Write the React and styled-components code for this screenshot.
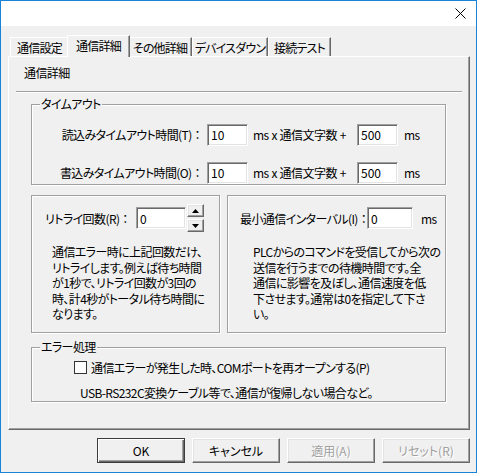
// Libraries

import React from 'react'
import styled, { createGlobalStyle, css } from 'styled-components'

// Private

const GlobalStyle = createGlobalStyle`
  html, body {
    margin: 0;
    padding: 0;
    background: #ffffff;
  }

  body {
    font-family: "Noto Sans CJK JP", "Noto Sans", sans-serif;
    font-size: 12px;
    font-feature-settings: "palt";
    letter-spacing: -0.6px;
    color: #000000;
  }

  * {
    box-sizing: border-box;
  }
`

const raised = css`
  background: #f0f0f0;
  border: 1px solid;
  border-color: #ffffff #696969 #696969 #ffffff;
  box-shadow: inset -1px -1px 0 #a0a0a0, inset 1px 1px 0 #e3e3e3;
`

const StyledWindow = styled.div`
  width: 477px;
  height: 473px;
  border: 1px solid #1883d7;
  background: #f0f0f0;
  display: flex;
  flex-direction: column;
`

const StyledTitleBar = styled.div`
  height: 25px;
  background: #ffffff;
  display: flex;
  align-items: center;
  justify-content: flex-end;
  padding-right: 10px;
`

const StyledBody = styled.div`
  flex: 1;
  display: flex;
  flex-direction: column;
  padding: 9px 6px 0 7px;
`

const StyledTabStrip = styled.div`
  height: 21px;
  display: flex;
  align-items: flex-end;
  padding-left: 2px;
`

const StyledTab = styled.div`
  ${({ $active, $width }) => `
    position: relative;
    z-index: ${$active ? 2 : 1};
    width: ${$active ? $width + 4 : $width}px;
    height: ${$active ? '22px' : '19px'};
    margin: ${$active ? '0 -2px -1px' : '0'};
    padding-bottom: ${$active ? '2px' : '0'};
    display: flex;
    align-items: center;
    justify-content: center;
    background: #f0f0f0;
    border: 1px solid;
    border-bottom: none;
    border-color: #ffffff #696969 transparent #ffffff;
    box-shadow: inset -1px 0 0 #a0a0a0;
    letter-spacing: -0.8px;
    white-space: nowrap;
  `}
`

const StyledPanel = styled.div`
  height: 374px;
  display: flex;
  flex-direction: column;
  padding: 0 7px;
  border: 1px solid;
  border-color: #ffffff #696969 #696969 #ffffff;
  box-shadow: inset -1px -1px 0 #a0a0a0;
`

const StyledHeader = styled.div`
  margin: 8px 0 0 8px;
  line-height: 16px;
`

const StyledSeparator = styled.div`
  height: 2px;
  margin-top: 10px;
  border-top: 1px solid #a0a0a0;
  border-bottom: 1px solid #ffffff;
`

const StyledGroups = styled.div`
  display: flex;
  flex-direction: column;
  margin: 11px 16px 0 15px;
`

const StyledGroup = styled.div`
  ${({ $height, $width, $top, $padTop, $padLeft }) => `
    position: relative;
    height: ${$height}px;
    width: ${$width ? `${$width}px` : 'auto'};
    flex: ${$width ? 'none' : '1'};
    margin-top: ${$top || 0}px;
    padding: ${$padTop || 0}px 0 0 ${$padLeft || 0}px;
    border: 1px solid #a0a0a0;
    box-shadow: inset 1px 1px 0 #ffffff, 1px 1px 0 #ffffff;
  `}
`

const StyledLegend = styled.span`
  position: absolute;
  top: -9px;
  left: 8px;
  padding: 0 1px;
  line-height: 16px;
  background: #f0f0f0;
`

const StyledTimeoutRows = styled.div`
  display: flex;
  flex-direction: column;
  gap: 15px;
`

const StyledTimeoutRow = styled.div`
  display: grid;
  grid-template-columns: 175px 41px 109px 41px auto;
  align-items: center;
  height: 23px;
  white-space: pre;
`

const StyledRowLabel = styled.span`
  text-align: right;
  padding-right: 4px;
`

const StyledColon = styled.span`
  font-feature-settings: normal;
`

const StyledUnit = styled.span`
  ${({ $gap }) => `
    padding-left: ${$gap}px;
    letter-spacing: -0.5px;
    word-spacing: 0.5px;
    white-space: pre;
  `}
`

const StyledEdit = styled.input`
  ${({ $width }) => `
    width: ${$width}px;
    height: 22px;
    margin: 0;
    padding: 0 0 0 3px;
    font: inherit;
    letter-spacing: 0;
    color: #000000;
    background: #ffffff;
    border: 1px solid;
    border-color: #a0a0a0 #ffffff #ffffff #a0a0a0;
    box-shadow: inset 1px 1px 0 #696969, inset -1px -1px 0 #e3e3e3;
    outline: none;
  `}
`

const StyledMidRow = styled.div`
  display: flex;
  gap: 7px;
  margin-top: 10px;
`

const StyledFieldRow = styled.div`
  display: flex;
  align-items: center;
  height: 28px;
  white-space: nowrap;
`

const StyledFieldLabel = styled.span`
  ${({ $width }) => `
    width: ${$width}px;
  `}
`

const StyledSpin = styled.div`
  display: flex;
  flex-direction: column;
  gap: 2px;
  margin-left: 1px;
`

const StyledSpinButton = styled.div`
  ${raised}
  width: 17px;
  height: 13px;
  display: flex;
  align-items: center;
  justify-content: center;
`

const StyledNote = styled.div`
  ${({ $indent }) => `
    margin-top: 12px;
    padding-left: ${$indent}px;
    line-height: 15.5px;
    white-space: nowrap;
  `}
`

const StyledCheckRow = styled.label`
  display: flex;
  align-items: center;
  height: 16px;
  padding-left: 42px;
  white-space: nowrap;
`

const StyledCheckBox = styled.span`
  width: 13px;
  height: 13px;
  margin-right: 4px;
  border: 1px solid #333333;
  background: #ffffff;
`

const StyledHint = styled.div`
  margin-top: 10px;
  padding-left: 48px;
  line-height: 16px;
  white-space: nowrap;
`

const StyledButtonRow = styled.div`
  display: flex;
  justify-content: flex-end;
  gap: 7px;
  margin-top: 8px;
`

const StyledButton = styled.button`
  ${({ $default, disabled }) => `
    width: 88px;
    height: 25px;
    margin: 0;
    padding: 0;
    font: inherit;
    background: #f0f0f0;
    color: ${disabled ? '#a0a0a0' : '#000000'};
    text-shadow: ${disabled ? '1px 1px 0 #ffffff' : 'none'};
    border: 1px solid;
    border-color: ${$default ? '#3c3c3c' : '#ffffff #696969 #696969 #ffffff'};
    box-shadow: ${$default
      ? 'inset 1px 1px 0 #ffffff, inset -1px -1px 0 #696969, inset -2px -2px 0 #a0a0a0'
      : 'inset -1px -1px 0 #a0a0a0, inset 1px 1px 0 #e3e3e3'};
  `}
`

const tabs = [
  { label: '通信設定', width: 59 },
  { label: '通信詳細', width: 59 },
  { label: 'その他詳細', width: 64 },
  { label: 'デバイスダウン', width: 76 },
  { label: '接続テスト', width: 63 },
]

const retryNote = [
  '通信エラー時に上記回数だけ、',
  'リトライします。例えば待ち時間',
  'が1秒で、リトライ回数が3回の',
  '時、計4秒がトータル待ち時間に',
  'なります。',
]

const intervalNote = [
  'PLCからのコマンドを受信してから次の',
  '送信を行うまでの待機時間です。全',
  '通信に影響を及ぼし、通信速度を低',
  '下させます。通常は0を指定して下さ',
  'い。',
]

const timeoutRows = [
  { label: '読込みタイムアウト時間(T)', rate: '10', base: '500' },
  { label: '書込みタイムアウト時間(O)', rate: '10', base: '500' },
]

const Arrow = ({ up }) => (
  <svg width="7" height="4" viewBox="0 0 7 4">
    <polygon points={up ? '3.5,0 7,4 0,4' : '0,0 7,0 3.5,4'} fill="#000" />
  </svg>
)

// Public

const App = () => (
  <>
    <GlobalStyle />
    <StyledWindow>
      <StyledTitleBar>
        <svg width="11" height="11" viewBox="0 0 11 11">
          <path d="M0.5 0.5 L10.5 10.5 M10.5 0.5 L0.5 10.5" stroke="#000" strokeWidth="1" />
        </svg>
      </StyledTitleBar>

      <StyledBody>
        <StyledTabStrip>
          {tabs.map((tab, i) => (
            <StyledTab key={tab.label} $active={i === 1} $width={tab.width}>{tab.label}</StyledTab>
          ))}
        </StyledTabStrip>

        <StyledPanel>
          <StyledHeader>通信詳細</StyledHeader>
          <StyledSeparator />

          <StyledGroups>
            <StyledGroup $height={90} $padTop={18}>
              <StyledLegend>タイムアウト</StyledLegend>
              <StyledTimeoutRows>
                {timeoutRows.map((row) => (
                  <StyledTimeoutRow key={row.label}>
                    <StyledRowLabel>{row.label}<StyledColon>：</StyledColon></StyledRowLabel>
                    <StyledEdit $width={41} defaultValue={row.rate} />
                    <StyledUnit $gap={5}>ms x 通信文字数 +</StyledUnit>
                    <StyledEdit $width={41} defaultValue={row.base} />
                    <StyledUnit $gap={6}>ms</StyledUnit>
                  </StyledTimeoutRow>
                ))}
              </StyledTimeoutRows>
            </StyledGroup>

            <StyledMidRow>
              <StyledGroup $height={138} $width={189} $padTop={8} $padLeft={13}>
                <StyledFieldRow>
                  <StyledFieldLabel $width={91}>リトライ回数(R)<StyledColon>：</StyledColon></StyledFieldLabel>
                  <StyledEdit $width={50} defaultValue="0" />
                  <StyledSpin>
                    <StyledSpinButton><Arrow up /></StyledSpinButton>
                    <StyledSpinButton><Arrow /></StyledSpinButton>
                  </StyledSpin>
                </StyledFieldRow>
                <StyledNote $indent={7}>
                  {retryNote.map((line) => <div key={line}>{line}</div>)}
                </StyledNote>
              </StyledGroup>

              <StyledGroup $height={138} $padTop={8} $padLeft={12}>
                <StyledFieldRow>
                  <StyledFieldLabel $width={127}>最小通信インターバル(I)<StyledColon>：</StyledColon></StyledFieldLabel>
                  <StyledEdit $width={46} defaultValue="0" />
                  <StyledUnit $gap={8}>ms</StyledUnit>
                </StyledFieldRow>
                <StyledNote $indent={13}>
                  {intervalNote.map((line) => <div key={line}>{line}</div>)}
                </StyledNote>
              </StyledGroup>
            </StyledMidRow>

            <StyledGroup $height={63} $top={14} $padTop={11}>
              <StyledLegend>エラー処理</StyledLegend>
              <StyledCheckRow>
                <StyledCheckBox />
                通信エラーが発生した時、COMポートを再オープンする(P)
              </StyledCheckRow>
              <StyledHint>USB-RS232C変換ケーブル等で、通信が復帰しない場合など。</StyledHint>
            </StyledGroup>
          </StyledGroups>
        </StyledPanel>

        <StyledButtonRow>
          <StyledButton type="button" $default>OK</StyledButton>
          <StyledButton type="button">キャンセル</StyledButton>
          <StyledButton type="button" disabled>適用(A)</StyledButton>
          <StyledButton type="button" disabled>リセット(R)</StyledButton>
        </StyledButtonRow>
      </StyledBody>
    </StyledWindow>
  </>
)

export default App
